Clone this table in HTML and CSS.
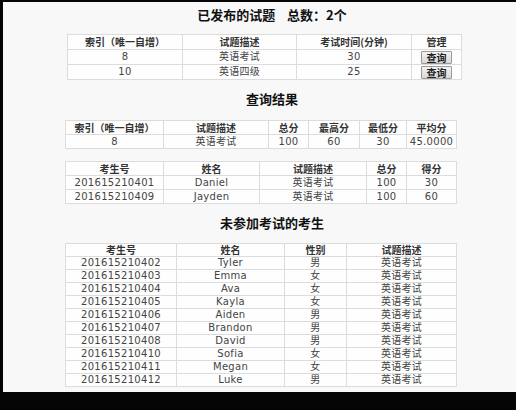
FILE: index.html
```html
<!DOCTYPE html>
<html>
<head>
<meta charset="utf-8">
<link rel="stylesheet" href="styles.css">
</head>
<body>
<div class="page">
  <h1 class="title t1">已发布的试题&nbsp;&nbsp;&nbsp;&nbsp;总数：2个</h1>
  <table class="grid g1">
    <colgroup><col class="c115"><col class="c114"><col class="c115"><col class="c50"></colgroup>
    <tr class="head"><th>索引（唯一自增）</th><th>试题描述</th><th>考试时间(分钟)</th><th>管理</th></tr>
    <tr><td>8</td><td>英语考试</td><td>30</td><td><button class="btn">查询</button></td></tr>
    <tr><td>10</td><td>英语四级</td><td>25</td><td><button class="btn">查询</button></td></tr>
  </table>

  <h2 class="title t2">查询结果</h2>
  <table class="grid g2">
    <colgroup><col class="c98"><col class="c105"><col class="c40"><col class="c51"><col class="c47"><col class="c50"></colgroup>
    <tr class="head"><th>索引（唯一自增）</th><th>试题描述</th><th>总分</th><th>最高分</th><th>最低分</th><th>平均分</th></tr>
    <tr><td>8</td><td>英语考试</td><td>100</td><td>60</td><td>30</td><td>45.0000</td></tr>
  </table>

  <table class="grid g3">
    <colgroup><col class="c98"><col class="c96"><col class="c107"><col class="c40"><col class="c50"></colgroup>
    <tr class="head"><th>考生号</th><th>姓名</th><th>试题描述</th><th>总分</th><th>得分</th></tr>
    <tr><td>201615210401</td><td>Daniel</td><td>英语考试</td><td>100</td><td>30</td></tr>
    <tr><td>201615210409</td><td>Jayden</td><td>英语考试</td><td>100</td><td>60</td></tr>
  </table>

  <h2 class="title t3">未参加考试的考生</h2>
  <table class="grid g4">
    <colgroup><col class="c111"><col class="c108"><col class="c62"><col class="c110"></colgroup>
    <tr class="head"><th>考生号</th><th>姓名</th><th>性别</th><th>试题描述</th></tr>
    <tr><td>201615210402</td><td>Tyler</td><td>男</td><td>英语考试</td></tr>
    <tr><td>201615210403</td><td>Emma</td><td>女</td><td>英语考试</td></tr>
    <tr><td>201615210404</td><td>Ava</td><td>女</td><td>英语考试</td></tr>
    <tr><td>201615210405</td><td>Kayla</td><td>女</td><td>英语考试</td></tr>
    <tr><td>201615210406</td><td>Aiden</td><td>男</td><td>英语考试</td></tr>
    <tr><td>201615210407</td><td>Brandon</td><td>男</td><td>英语考试</td></tr>
    <tr><td>201615210408</td><td>David</td><td>男</td><td>英语考试</td></tr>
    <tr><td>201615210410</td><td>Sofia</td><td>女</td><td>英语考试</td></tr>
    <tr><td>201615210411</td><td>Megan</td><td>女</td><td>英语考试</td></tr>
    <tr><td>201615210412</td><td>Luke</td><td>男</td><td>英语考试</td></tr>
  </table>
</div>
</body>
</html>
```

FILE: styles.css
```css
html, body {
  margin: 0;
  padding: 0;
  background: #050505;
}
body {
  width: 516px;
  height: 410px;
  overflow: hidden;
  font-family: "DejaVu Sans", "Noto Sans CJK SC", sans-serif;
}
.page {
  margin: 2px 0 0 3px;
  height: 390px;
  background: #f8f8f8;
  overflow: hidden;
}
.title {
  margin: 0;
  font-size: 13px;
  font-weight: bold;
  color: #111;
  text-align: center;
  line-height: 16px;
  padding-left: 25px;
  font-family: "Noto Sans CJK SC", "DejaVu Sans", sans-serif;
}
.t1 { padding-top: 5px; height: 27px; }
.t2 { padding-top: 11px; height: 29px; }
.t3 { padding-top: 11px; height: 28px; }

.grid {
  border-collapse: collapse;
  table-layout: fixed;
  background: #fefefe;
  border: 1px solid #d2d2d2;
  font-size: 10px;
  color: #444;
}
.grid th, .grid td {
  border: 1px solid #dcdcdc;
  padding: 0;
  text-align: center;
  white-space: nowrap;
  overflow: hidden;
}
.grid th {
  font-weight: bold;
  color: #333;
  font-family: "Noto Sans CJK SC", "DejaVu Sans", sans-serif;
}
.grid td {
  letter-spacing: 0.3px;
}
.g1 { width: 394px; margin-left: 64px; }
.g1 th, .g1 td { height: 14px; line-height: 14px; }
.g2 { width: 391px; margin-left: 62px; }
.g2 th, .g2 td { height: 13px; line-height: 13px; }
.g3 { width: 391px; margin-left: 62px; margin-top: 12px; }
.g3 th, .g3 td { height: 13px; line-height: 13px; }
.g4 { width: 391px; margin-left: 62px; }
.g4 th, .g4 td { height: 12px; line-height: 12px; }

.c115 { width: 115px; }
.c114 { width: 114px; }
.c50 { width: 50px; }
.c98 { width: 98px; }
.c105 { width: 105px; }
.c40 { width: 40px; }
.c51 { width: 51px; }
.c47 { width: 47px; }
.c96 { width: 96px; }
.c107 { width: 107px; }
.c111 { width: 111px; }
.c108 { width: 108px; }
.c62 { width: 62px; }
.c110 { width: 110px; }

.btn {
  display: inline-block;
  vertical-align: middle;
  width: 31px;
  height: 13px;
  padding: 0;
  margin: 0;
  font-size: 10px;
  line-height: 11px;
  font-weight: bold;
  color: #222;
  font-family: "Noto Sans CJK SC", sans-serif;
  background: linear-gradient(#f4f4f4, #d8d8d8);
  border: 1px solid #9a9a9a;
  border-radius: 1px;
}
```
